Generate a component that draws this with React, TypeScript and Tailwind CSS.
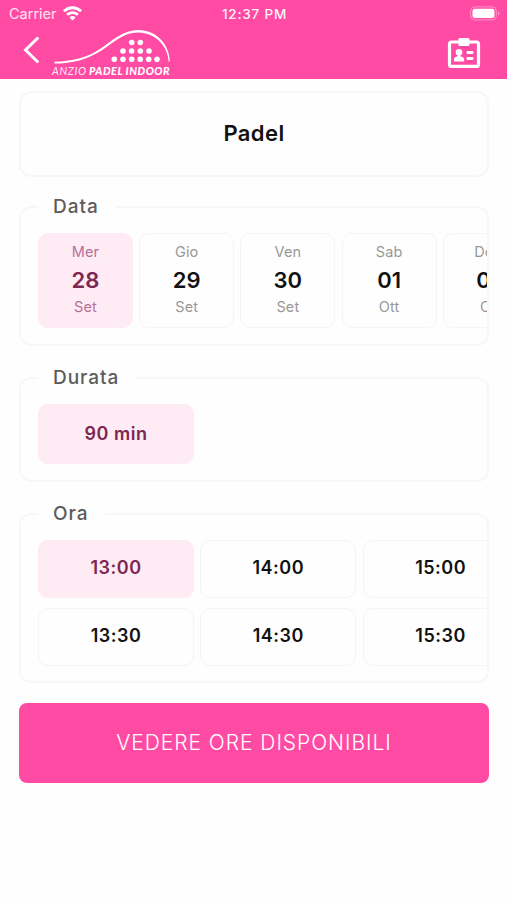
import type { ReactNode } from "react";
import clsx from "clsx";

const days = [
  { weekday: "Mer", day: "28", month: "Set" },
  { weekday: "Gio", day: "29", month: "Set" },
  { weekday: "Ven", day: "30", month: "Set" },
  { weekday: "Sab", day: "01", month: "Ott" },
  { weekday: "Dom", day: "02", month: "Ott" },
];

const hours = ["13:00", "14:00", "15:00", "13:30", "14:30", "15:30"];

function StatusBar() {
  return (
    <div className="grid h-[27px] grid-cols-3 items-center pl-[9px] pr-[7px]">
      <div className="flex items-center gap-[6px]">
        <span className="pt-px text-[14.5px] leading-none text-white/85">Carrier</span>
        <svg width="19" height="15" viewBox="0 0 19 15" fill="none" stroke="white" strokeWidth="2.8">
          <path d="M1 5.2a12.2 12.2 0 0 1 17 0" />
          <path d="M4.1 8.8a7.8 7.8 0 0 1 10.8 0" />
          <path d="M9.5 14.4 6.5 11.4a4.1 4.1 0 0 1 6 0Z" fill="white" stroke="none" />
        </svg>
      </div>
      <span className="pt-[2px] text-center text-[13.5px] font-medium leading-none tracking-[0.8px] text-white/95">12:37 PM</span>
      <svg className="justify-self-end" width="30" height="15" viewBox="0 0 30 15">
        <rect x="0.7" y="0.9" width="25.6" height="13" rx="4" fill="none" stroke="white" strokeOpacity="0.4" />
        <rect x="2.5" y="2.8" width="22" height="9.2" rx="2.2" fill="white" />
        <path d="M28 5.2c1.8.7 1.8 3.7 0 4.4Z" fill="white" fillOpacity="0.45" />
      </svg>
    </div>
  );
}

function Logo() {
  const rows = [
    { y: 14.5, xs: [81.7, 90.3] },
    { y: 23, xs: [73, 81.6, 90.3, 99] },
    { y: 31.3, xs: [64.3, 73, 81.7, 90.2, 98.7, 107] },
  ];
  return (
    <svg width="122" height="50" viewBox="0 0 122 50" fill="white">
      <path d="M4.5 33.7C22 33.4 37 29.8 50 21C64 11.5 73 2 88.5 2C106 2 119.5 16 119.8 33.5L118.7 33.5C117.5 17.5 105.5 5 88.5 4.5C74 4.1 65 13.6 51.5 22.5C38 31.4 22 35.6 4.5 35.6Z" />
      {rows.map((row) => row.xs.map((x) => <circle key={`${row.y}-${x}`} cx={x} cy={row.y} r="2.8" />))}
      <g fontFamily="Lato, sans-serif" fontSize="10.8" fontStyle="italic">
        <text x="2" y="46.5" textLength="34" fontWeight="400" fillOpacity="0.9">ANZIO</text>
        <text x="39" y="46.5" textLength="80.5" fontWeight="900">PADEL INDOOR</text>
      </g>
    </svg>
  );
}

function BadgeIcon() {
  return (
    <svg width="34" height="32" viewBox="0 0 34 32" fill="white">
      <rect x="2.5" y="5" width="29" height="24.4" rx="2" fill="none" stroke="white" strokeWidth="3.2" />
      <rect x="11.3" y="1" width="11.2" height="8" rx="1.6" />
      <circle cx="12" cy="15.3" r="3.3" />
      <path d="M10.6 17h2.8v2.2c2.1.3 3.7 1.5 3.7 3.4v1.9H6.9v-1.9c0-1.9 1.6-3.1 3.7-3.4Z" />
      <rect x="19.5" y="14" width="7" height="3" rx="1.2" />
      <rect x="19.5" y="20" width="7" height="3" rx="1.2" />
    </svg>
  );
}

function Section({ title, className, children }: { title: string; className: string; children: ReactNode }) {
  return (
    <fieldset className={clsx("min-w-0 rounded-[12px] border-2 border-[#f7f7f7] pl-[17px]", className)}>
      <legend className="h-6 pl-[15px] pr-[17px] text-[19px] font-medium leading-6 tracking-[0.95px] text-[#5c5c5c]">
        {title}
      </legend>
      <div className="overflow-hidden pt-[14px]">{children}</div>
    </fieldset>
  );
}

function Chip({ label, selected, className }: { label: string; selected?: boolean; className: string }) {
  return (
    <button
      className={clsx(
        "rounded-[10px] border-[1.5px] text-[18px] font-semibold leading-none tracking-[0.5px]",
        selected ? "border-[#feebf4] bg-[#feebf4] text-[#7d2652]" : "border-[#f4f4f4] bg-[#fefefe] text-[#111111]",
        className,
      )}
    >
      {label}
    </button>
  );
}

export default function App() {
  return (
    <div className="flex h-[900px] w-[507px] flex-col overflow-hidden bg-[#fefefe] font-['Inter',sans-serif]">
      <header className="h-[79px] shrink-0 bg-[#ff4ba4]">
        <StatusBar />
        <div className="flex h-[52px] items-start pl-[23px] pr-[26px]">
          <svg className="mt-[9px]" width="17" height="28" viewBox="0 0 17 28" fill="none" stroke="white" strokeWidth="3">
            <path d="M15.3 1.5 2.5 14l12.8 12.5" />
          </svg>
          <div className="ml-[10px] mt-px">
            <Logo />
          </div>
          <div className="ml-auto mt-[10px]">
            <BadgeIcon />
          </div>
        </div>
      </header>

      <main className="flex flex-col pl-[19px] pr-[18px]">
        <div className="mt-3 flex h-[86px] items-center justify-center rounded-[12px] border-2 border-[#f7f7f7]">
          <h1 className="pb-px text-[22px] font-semibold tracking-[0.4px] text-[#111111]">Padel</h1>
        </div>

        <Section title="Data" className="mt-[18px] h-[151px]">
          <div className="flex gap-[6.2px]">
            {days.map((d, i) => (
              <button
                key={d.day}
                className={clsx(
                  "flex h-[95px] w-[95px] shrink-0 flex-col items-center rounded-[10px] border-[1.5px] pt-[9px]",
                  i === 0 ? "border-[#feebf4] bg-[#feebf4] text-[#b5709a]" : "border-[#f4f4f4] text-[#989898]",
                )}
              >
                <span className="text-[14.5px] leading-[18px] tracking-[0.1px]">{d.weekday}</span>
                <span
                  className={clsx(
                    "mt-[6px] text-[22px] font-semibold leading-[26px]",
                    i === 0 ? "text-[#7d2652]" : "text-[#111111]",
                  )}
                >
                  {d.day}
                </span>
                <span className="mt-[5px] text-[14.5px] leading-[18px] tracking-[0.1px]">{d.month}</span>
              </button>
            ))}
          </div>
        </Section>

        <Section title="Durata" className="mt-5 h-[116px]">
          <Chip label="90 min" selected className="h-[60px] w-[156px]" />
        </Section>

        <Section title="Ora" className="mt-5 h-[181px]">
          <div className="grid grid-cols-[156px_156px_156px] gap-x-[6.3px] gap-y-[10px]">
            {hours.map((h, i) => (
              <Chip key={h} label={h} selected={i === 0} className="h-[58px] pb-[2px]" />
            ))}
          </div>
        </Section>

        <button className="mt-5 h-20 rounded-[8px] bg-[#ff4ba4] text-[21px] font-light tracking-[0.95px] text-white">
          VEDERE ORE DISPONIBILI
        </button>
      </main>
    </div>
  );
}
